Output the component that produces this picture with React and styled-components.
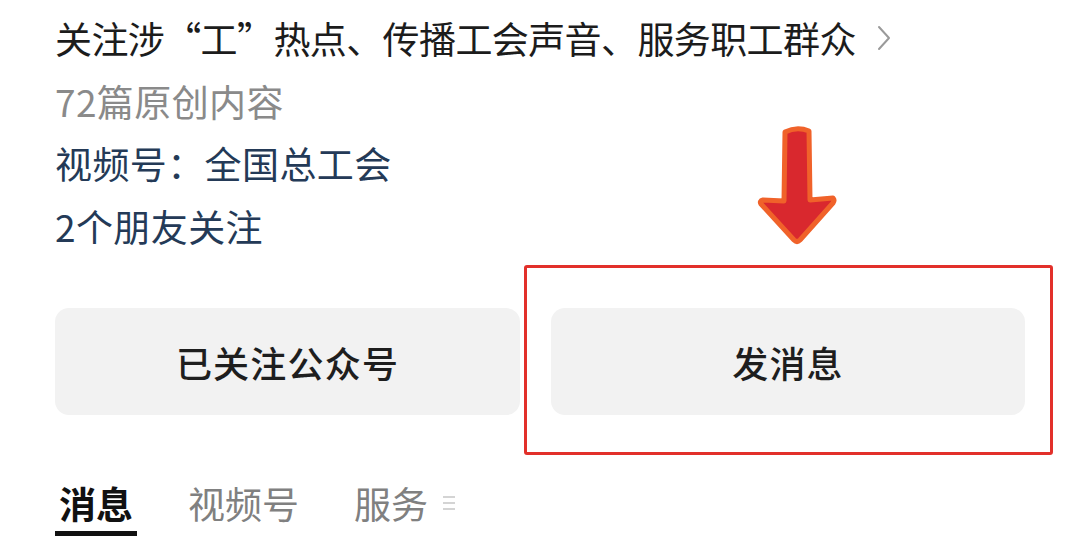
import React from 'react';
import styled, { createGlobalStyle } from 'styled-components';

const GlobalStyle = createGlobalStyle`
  html, body {
    margin: 0;
    padding: 0;
    background: #fff;
  }
  body {
    font-family: "Noto Sans CJK SC", "Noto Sans", sans-serif;
  }
`;

const Page = styled.div`
  position: relative;
  width: 1080px;
  height: 553px;
  overflow: hidden;
  background: #fff;
  padding: 7px 55px 0 55px;
  box-sizing: border-box;
`;

const Info = styled.div`
  display: flex;
  flex-direction: column;
`;

const Line = styled.div`
  display: flex;
  align-items: center;
  height: 62.5px;
  font-size: 37px;
  letter-spacing: ${(p) => (p.tight ? '-0.6px' : '0.4px')};
  color: ${(p) => p.color || '#1c1c1c'};

  > svg {
    margin-left: 20px;
  }
`;

const Buttons = styled.div`
  display: grid;
  grid-template-columns: 465px 474px;
  gap: 31px;
  margin-top: 51px;
`;

const Button = styled.div`
  height: 107px;
  border-radius: 14px;
  background: #f2f2f2;
  display: flex;
  align-items: center;
  justify-content: center;
  font-size: 36px;
  font-weight: 500;
  color: #1e1e1e;
  letter-spacing: 1.2px;
`;

const Tabs = styled.div`
  display: flex;
  align-items: flex-start;
  gap: 47px;
  margin-top: 61px;
`;

const Tab = styled.div`
  display: flex;
  align-items: center;
  box-sizing: border-box;
  height: 60px;
  padding: 0 4px 2px;
  font-size: 37px;
  font-weight: ${(p) => (p.active ? 700 : 400)};
  color: ${(p) => (p.active ? '#111' : '#808080')};
  border-bottom: 5px solid ${(p) => (p.active ? '#111' : 'transparent')};

  > svg {
    margin-left: 14px;
  }
`;

const Highlight = styled.div`
  position: absolute;
  left: 524px;
  top: 265px;
  width: 529px;
  height: 190px;
  border: 3px solid #e2302a;
  border-radius: 3px;
  box-sizing: border-box;
`;

const Arrow = styled.svg`
  position: absolute;
  left: 755px;
  top: 124px;
`;

function Chevron() {
  return (
    <svg width="16" height="28" viewBox="0 0 16 28">
      <path d="M3 3 L13 14 L3 25" fill="none" stroke="#9a9a9a" strokeWidth="2" strokeLinecap="round" strokeLinejoin="round" />
    </svg>
  );
}

function MenuLines() {
  return (
    <svg width="14" height="18" viewBox="0 0 14 18">
      <path d="M1 3 H13 M1 9 H13 M1 15 H13" stroke="#d4d4d4" strokeWidth="1.8" />
    </svg>
  );
}

export default function App() {
  return (
    <>
      <GlobalStyle />
      <Page>
        <Info>
          <Line tight>
            关注涉“工”热点、传播工会声音、服务职工群众
            <Chevron />
          </Line>
          <Line color="#8a8a8a">72篇原创内容</Line>
          <Line color="#243a57">视频号：全国总工会</Line>
          <Line color="#243a57">2个朋友关注</Line>
        </Info>
        <Buttons>
          <Button>已关注公众号</Button>
          <Button>发消息</Button>
        </Buttons>
        <Tabs>
          <Tab active>消息</Tab>
          <Tab>视频号</Tab>
          <Tab>
            服务
            <MenuLines />
          </Tab>
        </Tabs>
        <Arrow width="84" height="122" viewBox="0 0 84 122">
          <path
            d="M30 8 Q42 2 54 7 L55 76 L78 74 Q80 76 78 79 L45 116 Q42 119 39 116 L6 80 Q4 77 8 76 L29 77 Z"
            fill="#d9282e"
            stroke="#f0622a"
            strokeWidth="5"
            strokeLinejoin="round"
          />
        </Arrow>
        <Highlight />
      </Page>
    </>
  );
}
